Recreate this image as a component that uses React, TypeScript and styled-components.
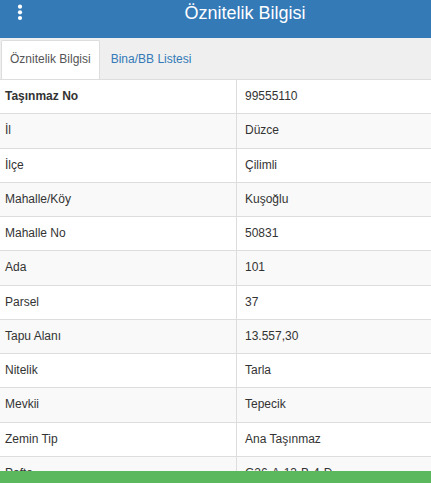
import styled, { createGlobalStyle } from 'styled-components';

interface IAttribute {
  label: string;
  value: string;
  strong?: boolean;
}

const attributes: IAttribute[] = [
  { label: 'Taşınmaz No', value: '99555110', strong: true },
  { label: 'İl', value: 'Düzce' },
  { label: 'İlçe', value: 'Çilimli' },
  { label: 'Mahalle/Köy', value: 'Kuşoğlu' },
  { label: 'Mahalle No', value: '50831' },
  { label: 'Ada', value: '101' },
  { label: 'Parsel', value: '37' },
  { label: 'Tapu Alanı', value: '13.557,30' },
  { label: 'Nitelik', value: 'Tarla' },
  { label: 'Mevkii', value: 'Tepecik' },
  { label: 'Zemin Tip', value: 'Ana Taşınmaz' },
  { label: 'Pafta', value: 'G26-A-13-B-4-D' },
];

const GlobalStyle = createGlobalStyle`
  html, body {
    margin: 0;
    padding: 0;
    overflow: hidden;
    background: #fff;
    font-family: "Liberation Sans", Arial, sans-serif;
    color: #333;
  }
`;

const Header = styled.header`
  display: grid;
  grid-template-columns: 59px 1fr;
  height: 38px;
  background-color: #337ab7;
  color: #fff;
`;

const MenuButton = styled.button`
  display: flex;
  justify-content: flex-start;
  align-items: flex-start;
  padding: 4px 0 0 17px;
  margin: 0;
  border: none;
  background: transparent;
  cursor: pointer;
`;

const Title = styled.h1`
  margin: 0;
  padding-top: 3px;
  font-size: 18px;
  font-weight: normal;
  line-height: 20px;
  text-align: center;
`;

const TabBar = styled.nav`
  display: flex;
  align-items: flex-end;
  height: 42px;
  padding: 3px 0 0 1px;
  box-sizing: border-box;
  background-color: #efefef;
  border-bottom: 1px solid #ddd;
`;

const Tab = styled.a<{ $active?: boolean }>`
  display: block;
  height: 39px;
  box-sizing: border-box;
  padding: 0 8px;
  margin-right: 2px;
  font-size: 12px;
  line-height: 37px;
  text-decoration: none;
  cursor: pointer;
  color: ${p => (p.$active ? '#555' : '#337ab7')};
  background-color: ${p => (p.$active ? '#fff' : 'transparent')};
  border: 1px solid ${p => (p.$active ? '#ddd' : 'transparent')};
  border-bottom: none;
  border-radius: 2px 2px 0 0;
`;

const Table = styled.div`
  display: flex;
  flex-direction: column;
`;

const Row = styled.div<{ $striped: boolean }>`
  display: grid;
  grid-template-columns: 237px 1fr;
  border-bottom: 1px solid #ddd;
  background-color: ${p => (p.$striped ? '#f9f9f9' : '#fff')};
  font-size: 12px;
  line-height: 17.25px;
`;

const Label = styled.div<{ $strong?: boolean }>`
  padding: 8px 8px 8px 5px;
  border-right: 1px solid #ddd;
  font-weight: ${p => (p.$strong ? 'bold' : 'normal')};
  white-space: nowrap;
`;

const Value = styled.div`
  padding: 8px;
  white-space: nowrap;
`;

const StatusBar = styled.div`
  position: fixed;
  left: 0;
  right: 0;
  bottom: 0;
  height: 12px;
  background-color: #5cb85c;
`;

const KebabIcon = () => (
  <svg width="6" height="18" viewBox="0 0 6 18" fill="#fff">
    <circle cx="3" cy="2.7" r="2.1" />
    <circle cx="3" cy="8.3" r="2.1" />
    <circle cx="3" cy="14" r="2.1" />
  </svg>
);

const App = () => {
  return (
    <>
      <GlobalStyle />
      <Header>
        <MenuButton aria-label="Menü">
          <KebabIcon />
        </MenuButton>
        <Title>Öznitelik Bilgisi</Title>
      </Header>
      <TabBar>
        <Tab $active>Öznitelik Bilgisi</Tab>
        <Tab>Bina/BB Listesi</Tab>
      </TabBar>
      <Table>
        {attributes.map((item, i) => (
          <Row key={item.label} $striped={i % 2 === 1}>
            <Label $strong={item.strong}>{item.label}</Label>
            <Value>{item.value}</Value>
          </Row>
        ))}
      </Table>
      <StatusBar />
    </>
  );
};

export default App;
